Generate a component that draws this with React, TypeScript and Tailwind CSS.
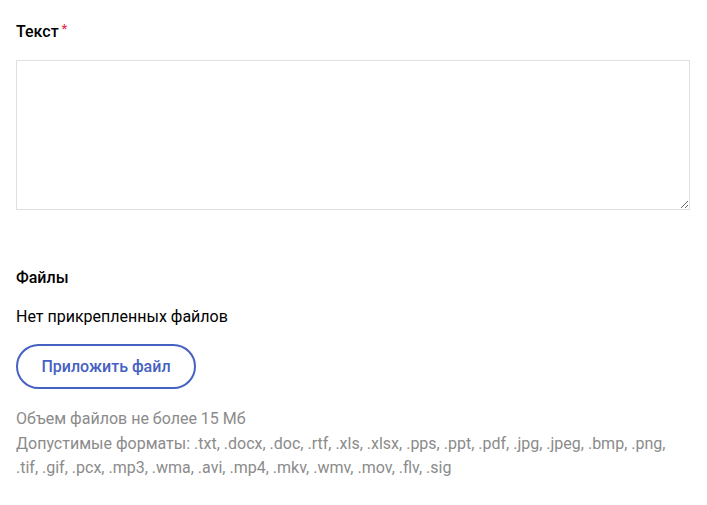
export default function App() {
  return (
    <div className="min-h-screen bg-white px-4 pt-[21px] font-['Roboto',sans-serif] text-black">
      <label className="flex items-start text-[16px] font-medium leading-[22px]">
        Текст
        <span className="ml-[3px] -mt-[3px] text-[13px] text-[#e8314a]">*</span>
      </label>
      <textarea className="mt-[17px] block h-[150px] w-[674px] resize-y border border-[#e0e0e0] bg-white outline-none" />

      <div className="mt-[57px] text-[16px] font-medium leading-[22px]">Файлы</div>
      <div className="mt-[17px] text-[16px] leading-[22px]">Нет прикрепленных файлов</div>
      <button className="mt-[16px] h-[45px] w-[180px] rounded-full border-2 border-[#4561c1] text-[16px] font-medium text-[#4561c1]">
        Приложить файл
      </button>
      <div className="mt-[18px] text-[16px] leading-[24.5px] text-[#8b8b8b] w-[675px]">
        <div>Объем файлов не более 15 Мб</div>
        <div>
          Допустимые форматы: .txt, .docx, .doc, .rtf, .xls, .xlsx, .pps, .ppt, .pdf, .jpg, .jpeg, .bmp, .png, .tif, .gif, .pcx, .mp3, .wma, .avi, .mp4, .mkv, .wmv, .mov, .flv, .sig
        </div>
      </div>
    </div>
  );
}
